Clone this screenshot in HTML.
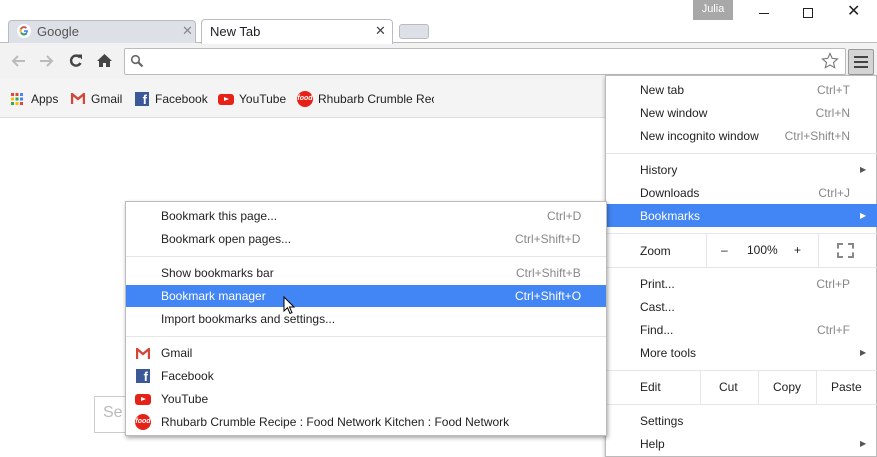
<!DOCTYPE html>
<html><head><style>
*{margin:0;padding:0;box-sizing:border-box}
body{width:877px;height:457px;overflow:hidden;position:relative;background:#fff;font-family:"Liberation Sans",sans-serif;font-size:12px;color:#222}
.a{position:absolute;white-space:nowrap}
.t{position:absolute;white-space:nowrap;line-height:14px}
.sc{color:#888}
.sep{position:absolute;height:1px;background:#e6e6e6}
</style></head><body>
<div class="a" style="left:0;top:42px;width:877px;height:1px;background:#bdbdbd"></div>
<div class="a" style="left:0;top:43px;width:877px;height:36px;background:#f2f2f2"></div>
<div class="a" style="left:693px;top:0;width:40px;height:20px;background:#a8a8a8;color:#fff;font-size:11px;text-align:center;line-height:19px">Julia</div>
<div class="a" style="left:759px;top:13px;width:10px;height:1px;background:#222"></div>
<div class="a" style="left:803px;top:8px;width:10px;height:10px;border:1px solid #222"></div>
<div class="t" style="left:847px;top:5px;font-size:16px">✕</div>
<div class="a" style="left:8px;top:20px;width:188px;height:23px;background:#dde1e7;border:1px solid #b8bcc3;border-bottom:none;border-radius:4px 4px 0 0"></div>
<svg class="a" style="left:17px;top:24px" width="14" height="14" viewBox="0 0 14 14"><circle cx="7" cy="7" r="7" fill="#fff"/><path d="M11 6.3H7v1.6h2.3A2.7 2.7 0 1 1 8.8 4.6l1.1-1.1A4.2 4.2 0 1 0 11 7z" fill="#4285f4"/><path d="M3.4 4.7A4.2 4.2 0 0 1 9.9 3.5L8.8 4.6A2.7 2.7 0 0 0 4.6 5.6z" fill="#ea4335"/><path d="M3.4 4.7l1.2.9a2.7 2.7 0 0 0 0 2.8l-1.2.9a4.2 4.2 0 0 1 0-4.6z" fill="#fbbc05"/><path d="M3.4 9.3l1.2-.9A2.7 2.7 0 0 0 9.3 9l1 1A4.2 4.2 0 0 1 3.4 9.3z" fill="#34a853"/></svg>
<div class="t" style="left:37px;top:25px;font-size:13px;color:#555">Google</div>
<div class="t" style="left:182px;top:24px;font-size:13px;color:#888">✕</div>
<div class="a" style="left:201px;top:19px;width:192px;height:25px;background:#fff;border:1px solid #b8bcc3;border-bottom:none;border-radius:4px 4px 0 0"></div>
<div class="t" style="left:210px;top:25px;font-size:13px;color:#222">New Tab</div>
<div class="t" style="left:375px;top:24px;font-size:13px;color:#444">✕</div>
<div class="a" style="left:399px;top:24px;width:30px;height:15px;background:#dde1e7;border:1px solid #b8bcc3;border-radius:3px"></div>
<svg class="a" style="left:10px;top:54px" width="16" height="14" viewBox="0 0 16 14"><path d="M15 7H3M8 2L3 7l5 5" fill="none" stroke="#bbb" stroke-width="2"/></svg>
<svg class="a" style="left:39px;top:54px" width="16" height="14" viewBox="0 0 16 14"><path d="M1 7h12M8 2l5 5-5 5" fill="none" stroke="#bbb" stroke-width="2"/></svg>
<svg class="a" style="left:68px;top:53px" width="16" height="16" viewBox="0 0 16 16"><path d="M12.5 10A5 5 0 1 1 12 4.5" fill="none" stroke="#444" stroke-width="2.4"/><path d="M9 1.5h5v5z" fill="#444"/></svg>
<svg class="a" style="left:97px;top:53px" width="15" height="15" viewBox="0 0 15 15"><path d="M7.5 1L0 8h2v6h4v-4h3v4h4V8h2z" fill="#444"/></svg>
<div class="a" style="left:124px;top:48px;width:722px;height:27px;background:#fff;border:1px solid #bbb;border-radius:2px"></div>
<svg class="a" style="left:130px;top:54px" width="14" height="14" viewBox="0 0 14 14"><circle cx="5.5" cy="5.5" r="3.8" fill="none" stroke="#666" stroke-width="1.6"/><path d="M8.3 8.3L12.5 12.5" stroke="#666" stroke-width="2.2"/></svg>
<svg class="a" style="left:821px;top:52px" width="18" height="18" viewBox="0 0 18 18"><path d="M9 1.5l2.2 4.9 5.3.5-4 3.6 1.2 5.2L9 13l-4.7 2.7 1.2-5.2-4-3.6 5.3-.5z" fill="none" stroke="#777" stroke-width="1.1"/></svg>
<div class="a" style="left:848px;top:49px;width:26px;height:26px;background:#d4d4d4;border:1px solid #999;border-radius:2px"></div>
<div class="a" style="left:854px;top:56px;width:14px;height:2px;background:#444;box-shadow:0 5px 0 #444,0 10px 0 #444"></div>
<div class="a" style="left:0;top:79px;width:877px;height:39px;background:#f4f4f4;border-bottom:1px solid #ddd"></div>
<svg class="a" style="left:11px;top:93px" width="12" height="12"><rect x="0" y="0" width="3" height="3" fill="#ea4335"/><rect x="4.5" y="0" width="3" height="3" fill="#ea4335"/><rect x="9" y="0" width="3" height="3" fill="#4285f4"/><rect x="0" y="4.5" width="3" height="3" fill="#fbbc05"/><rect x="4.5" y="4.5" width="3" height="3" fill="#34a853"/><rect x="9" y="4.5" width="3" height="3" fill="#4285f4"/><rect x="0" y="9" width="3" height="3" fill="#34a853"/><rect x="4.5" y="9" width="3" height="3" fill="#fbbc05"/><rect x="9" y="9" width="3" height="3" fill="#ea4335"/></svg>
<div class="t" style="left:31px;top:92px">Apps</div>
<svg class="a" style="left:71px;top:93px" width="14" height="12" viewBox="0 0 14 12"><path d="M1 11V1l6 5 6-5v10" fill="none" stroke="#d44638" stroke-width="2.4"/></svg>
<div class="t" style="left:91px;top:92px">Gmail</div>
<div class="a" style="left:135px;top:92px;width:14px;height:14px;background:#3b5998;color:#fff;font-weight:bold;font-size:13px;line-height:16px;text-align:right;padding-right:2px">f</div>
<div class="t" style="left:155px;top:92px">Facebook</div>
<div class="a" style="left:218px;top:94px;width:16px;height:11px;background:#e62117;border-radius:3px"></div>
<div class="a" style="left:224px;top:97px;border-left:5px solid #fff;border-top:2.5px solid transparent;border-bottom:2.5px solid transparent"></div>
<div class="t" style="left:239px;top:92px">YouTube</div>
<div class="a" style="left:297px;top:91px;width:16px;height:16px;background:#e62117;border-radius:50%;color:#fff;font-size:7px;font-style:italic;font-weight:bold;line-height:16px;text-align:center">food</div>
<div class="t" style="left:318px;top:92px;width:116px;overflow:hidden">Rhubarb Crumble Rec</div>
<div class="a" style="left:94px;top:396px;width:40px;height:37px;border:1px solid #ccc"></div>
<div class="t" style="left:103px;top:406px;font-size:16px;color:#bbb">Se</div>
<div class="a" style="left:605px;top:75px;width:272px;height:382px;background:#fff;border:1px solid #bbb;box-shadow:0 2px 4px rgba(0,0,0,.3)"></div>
<div class="t" style="left:640px;top:83px">New tab</div><div class="t sc" style="right:27px;top:83px">Ctrl+T</div>
<div class="t" style="left:640px;top:106px">New window</div><div class="t sc" style="right:27px;top:106px">Ctrl+N</div>
<div class="t" style="left:640px;top:129px">New incognito window</div><div class="t sc" style="right:27px;top:129px">Ctrl+Shift+N</div>
<div class="sep" style="left:606px;top:153px;width:271px"></div>
<div class="t" style="left:640px;top:163px">History</div><div class="t" style="left:860px;top:163px;font-size:8px;color:#555">▶</div>
<div class="t" style="left:640px;top:186px">Downloads</div><div class="t sc" style="right:27px;top:186px">Ctrl+J</div>
<div class="a" style="left:606px;top:204px;width:271px;height:23px;background:#4285f4"></div>
<div class="t" style="left:640px;top:209px;color:#fff">Bookmarks</div><div class="t" style="left:860px;top:209px;font-size:8px;color:#fff">▶</div>
<div class="sep" style="left:606px;top:233px;width:271px"></div>
<div class="t" style="left:640px;top:244px">Zoom</div>
<div class="a" style="left:706px;top:234px;width:1px;height:33px;background:#e6e6e6"></div>
<div class="t" style="left:721px;top:243px">–</div>
<div class="t" style="left:747px;top:243px">100%</div>
<div class="t" style="left:794px;top:243px">+</div>
<div class="a" style="left:818px;top:234px;width:1px;height:33px;background:#e6e6e6"></div>
<div class="a" style="left:837px;top:243px;width:17px;height:15px;border:2px dashed #888"></div>
<div class="sep" style="left:606px;top:267px;width:271px"></div>
<div class="t" style="left:640px;top:277px">Print...</div><div class="t sc" style="right:27px;top:277px">Ctrl+P</div>
<div class="t" style="left:640px;top:300px">Cast...</div>
<div class="t" style="left:640px;top:323px">Find...</div><div class="t sc" style="right:27px;top:323px">Ctrl+F</div>
<div class="t" style="left:640px;top:346px">More tools</div><div class="t" style="left:860px;top:346px;font-size:8px;color:#555">▶</div>
<div class="sep" style="left:606px;top:370px;width:271px"></div>
<div class="t" style="left:640px;top:380px">Edit</div>
<div class="a" style="left:700px;top:370px;width:1px;height:34px;background:#e6e6e6"></div>
<div class="t" style="left:719px;top:380px">Cut</div>
<div class="a" style="left:758px;top:370px;width:1px;height:34px;background:#e6e6e6"></div>
<div class="t" style="left:773px;top:380px">Copy</div>
<div class="a" style="left:816px;top:370px;width:1px;height:34px;background:#e6e6e6"></div>
<div class="t" style="left:831px;top:380px">Paste</div>
<div class="sep" style="left:606px;top:404px;width:271px"></div>
<div class="t" style="left:640px;top:414px">Settings</div>
<div class="t" style="left:640px;top:437px">Help</div><div class="t" style="left:860px;top:437px;font-size:8px;color:#555">▶</div>
<div class="a" style="left:125px;top:201px;width:482px;height:235px;background:#fff;border:1px solid #bbb;box-shadow:1px 2px 4px rgba(0,0,0,.35)"></div>
<div class="t" style="left:161px;top:209px">Bookmark this page...</div><div class="t sc" style="left:547px;top:209px">Ctrl+D</div>
<div class="t" style="left:161px;top:232px">Bookmark open pages...</div><div class="t sc" style="left:515px;top:232px">Ctrl+Shift+D</div>
<div class="sep" style="left:126px;top:256px;width:480px"></div>
<div class="t" style="left:161px;top:266px">Show bookmarks bar</div><div class="t sc" style="left:516px;top:266px">Ctrl+Shift+B</div>
<div class="a" style="left:126px;top:285px;width:480px;height:22px;background:#4285f4"></div>
<div class="t" style="left:161px;top:289px;color:#fff">Bookmark manager</div><div class="t" style="left:515px;top:289px;color:#fff">Ctrl+Shift+O</div>
<svg class="a" style="left:283px;top:296px" width="12" height="19" viewBox="0 0 12 19"><path d="M1 1v14l3.5-3.3 2.5 5.8 2-.9-2.5-5.6H11z" fill="#fff" stroke="#000" stroke-width="1"/></svg>
<div class="t" style="left:161px;top:312px">Import bookmarks and settings...</div>
<div class="sep" style="left:126px;top:336px;width:480px"></div>
<svg class="a" style="left:136px;top:348px" width="14" height="11" viewBox="0 0 14 11"><path d="M1 11V1l6 5 6-5v10" fill="none" stroke="#d44638" stroke-width="2.4"/></svg>
<div class="t" style="left:161px;top:346px">Gmail</div>
<div class="a" style="left:136px;top:369px;width:14px;height:14px;background:#3b5998;color:#fff;font-weight:bold;font-size:13px;line-height:16px;text-align:right;padding-right:2px">f</div>
<div class="t" style="left:161px;top:369px">Facebook</div>
<div class="a" style="left:135px;top:394px;width:16px;height:11px;background:#e62117;border-radius:3px"></div>
<div class="a" style="left:141px;top:397px;border-left:5px solid #fff;border-top:2.5px solid transparent;border-bottom:2.5px solid transparent"></div>
<div class="t" style="left:161px;top:392px">YouTube</div>
<div class="a" style="left:135px;top:414px;width:16px;height:16px;background:#e62117;border-radius:50%;color:#fff;font-size:7px;font-style:italic;font-weight:bold;line-height:16px;text-align:center">food</div>
<div class="t" style="left:161px;top:415px">Rhubarb Crumble Recipe : Food Network Kitchen : Food Network</div>
</body></html>
